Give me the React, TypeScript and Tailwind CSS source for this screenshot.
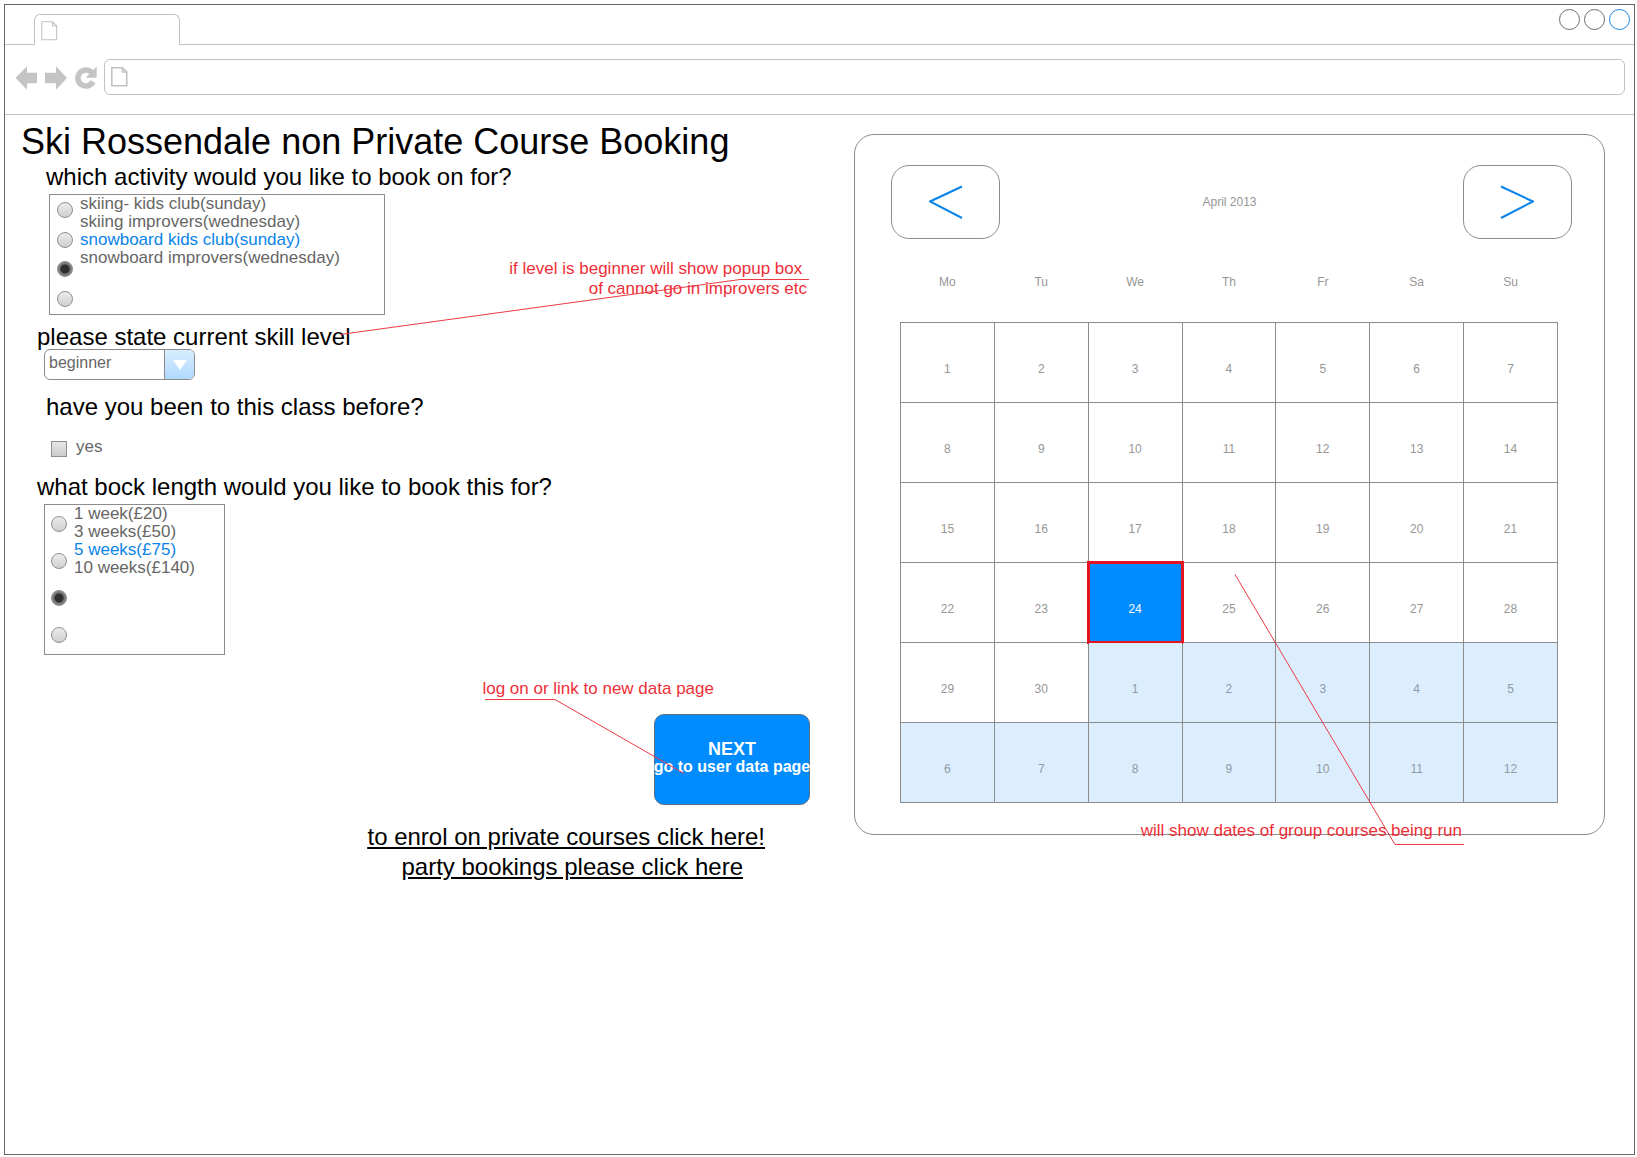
import { useState } from "react";

function PageIcon({ bold }: { bold?: boolean }) {
  return (
    <svg
      aria-hidden="true"
      className="block shrink-0"
      width="17"
      height="20"
      viewBox="0 0 17 20"
      fill="none"
      stroke="#c2c2c2"
      strokeWidth={bold ? 1.6 : 1.1}
    >
      <path d="M0.800 0.800H11.500L15.700 5V18.700H0.800Z" />
      <path d="M11.500 0.800V5H15.700" />
    </svg>
  );
}

function WindowBar() {
  return (
    <div className="flex h-10">
      <div className="w-[29px] shrink-0 border-b border-[#c2c2c2]" />
      <div className="mt-[9px] w-[146px] shrink-0 rounded-t-md border border-b-0 border-[#c2c2c2] pt-1.5 pl-1.5">
        <PageIcon />
      </div>
      <div className="flex flex-1 justify-end gap-1 border-b border-[#c2c2c2] pt-1 pr-1">
        <button aria-label="Minimize" className="size-[21px] rounded-full border border-[#6b6b6b]" />
        <button aria-label="Maximize" className="size-[21px] rounded-full border border-[#6b6b6b]" />
        <button aria-label="Close" className="size-[21px] rounded-full border border-[#1a84e0]" />
      </div>
    </div>
  );
}

function AddressBar() {
  return (
    <div className="flex items-start border-b border-[#c2c2c2] pt-3.5 pr-[9px] pb-[19px] pl-2.5">
      <div className="flex h-9 shrink-0 items-center gap-2 pt-0.5">
        <button aria-label="Back">
          <svg width="22" height="24" viewBox="0 0 22 24" fill="#c4c4c4" className="block">
            <path d="M0.500 12L12 0.300V6.700H22V17.300H12V23.700Z" />
          </svg>
        </button>
        <button aria-label="Forward">
          <svg width="22" height="24" viewBox="0 0 22 24" fill="#c4c4c4" className="block">
            <path d="M22 12L11 0.300V6.700H0V17.300H11V23.700Z" />
          </svg>
        </button>
        <button aria-label="Reload">
          <svg width="22" height="24" viewBox="0 0 22 24" className="block">
            <path
              d="M18 15.600A8 8 0 1 1 17 6.800"
              fill="none"
              stroke="#c4c4c4"
              strokeWidth="5.600"
            />
            <path d="M21.700 0.400V11.800H10.800Z" fill="#c4c4c4" />
          </svg>
        </button>
      </div>
      <label className="ml-[7px] flex h-9 flex-1 items-center gap-2 rounded-md border border-[#c2c2c2] pl-1.5">
        <PageIcon bold />
        <input aria-label="Address" className="min-w-0 flex-1 text-base outline-none" />
      </label>
    </div>
  );
}

type RadioBoxProps = {
  name: string;
  options: string[];
  initial: number;
  size: string;
};

function RadioBox({ name, options, initial, size }: RadioBoxProps) {
  const [selected, setSelected] = useState(initial);
  return (
    <div role="radiogroup" aria-label={name} className={`flex border border-[#8c8c8c] ${size}`}>
      <div className="flex flex-col justify-around">
        {options.map((option, i) => (
          <input
            key={option}
            type="radio"
            id={`${name}-${i}`}
            name={name}
            checked={selected === i}
            onChange={() => setSelected(i)}
            className="block size-4 appearance-none rounded-full border border-[#8f8f8f] bg-linear-to-b from-[#ececec] to-[#cfcfcf] checked:border-[#8a8a8a] checked:bg-[radial-gradient(circle,#2e2e2e_0_4px,#6e6e6e_5px,#9a9a9a_8px)]"
          />
        ))}
      </div>
      <div className="flex flex-col">
        {options.map((option, i) => (
          <label
            key={option}
            htmlFor={`${name}-${i}`}
            className={`text-[17px] leading-[18px] ${selected === i ? "text-[#0a84e8]" : "text-[#666666]"}`}
          >
            {option}
          </label>
        ))}
      </div>
    </div>
  );
}

function BookingForm() {
  return (
    <form className="flex min-w-0 flex-col pt-1.5" onSubmit={(e) => e.preventDefault()}>
      <h1 className="pl-4 text-[36px] leading-[42px]">Ski Rossendale non Private Course Booking</h1>

      <h2 className="pt-0.5 pl-[41px] text-2xl leading-6">
        which activity would you like to book on for?
      </h2>
      <div className="flex items-start justify-between pt-[5px] pr-[47px] pl-11">
        <RadioBox
          name="activity"
          options={[
            "skiing- kids club(sunday)",
            "skiing improvers(wednesday)",
            "snowboard kids club(sunday)",
            "snowboard improvers(wednesday)",
          ]}
          initial={2}
          size="h-[121px] w-[336px] gap-[7px] pl-[7px]"
        />
        <p className="pt-[65px] text-right text-[17px] leading-5 text-[#ee2f38]">
          if level is beginner will show popup box&nbsp;
          <br />
          of cannot go in improvers etc
        </p>
      </div>

      <label htmlFor="skill" className="pt-2.5 pl-8 text-2xl leading-6">
        please state current skill level
      </label>
      <div className="relative ml-[39px] h-[31px] w-[151px] overflow-hidden rounded-md border border-[#8c8c8c]">
        <select
          id="skill"
          defaultValue="beginner"
          className="block h-full w-full appearance-none pb-1 pl-1 text-base leading-5 text-[#666666]"
        >
          <option>beginner</option>
          <option>intermediate</option>
          <option>advanced</option>
        </select>
        <span className="pointer-events-none absolute inset-y-0 right-0 flex w-[30px] items-center justify-center border-l border-[#8c8c8c] bg-linear-to-b from-[#d9edff] to-[#afd9ff]">
          <svg width="14" height="10" viewBox="0 0 14 10" fill="#ffffff" aria-hidden="true">
            <path d="M0 0H14L7 10Z" />
          </svg>
        </span>
      </div>

      <h2 className="pt-[15px] pl-[41px] text-2xl leading-6">have you been to this class before?</h2>
      <div className="flex items-center gap-[9px] pt-[18px] pb-[18px] pl-[46px]">
        <input
          type="checkbox"
          id="returning"
          className="mt-1 size-4 appearance-none border border-[#8f8f8f] bg-linear-to-b from-[#e6e6e6] to-[#cccccc] checked:from-[#8a8a8a] checked:to-[#5a5a5a]"
        />
        <label htmlFor="returning" className="text-[17px] leading-5 text-[#666666]">
          yes
        </label>
      </div>

      <h2 className="pl-8 text-2xl leading-6">what bock length would you like to book this for?</h2>
      <div className="pt-[5px] pl-[39px]">
        <RadioBox
          name="length"
          options={["1 week(£20)", "3 weeks(£50)", "5 weeks(£75)", "10 weeks(£140)"]}
          initial={2}
          size="h-[151px] w-[181px] gap-[7px] pl-1.5"
        />
      </div>

      <div className="flex flex-col items-end pt-6 pr-11">
        <p className="pr-24 text-[17px] leading-5 text-[#ee2f38]">log on or link to new data page</p>
        <button
          type="submit"
          className="mt-[15px] flex h-[91px] w-[156px] flex-col items-center justify-center rounded-[10px] border border-[#5f6f80] bg-[#008cff] pb-[3px] font-bold whitespace-nowrap text-white"
        >
          <span className="text-lg leading-[18px]">NEXT</span>
          <span className="text-base leading-[18px]">go to user data page</span>
        </button>
      </div>

      <nav className="flex flex-col items-end pt-[17px] pr-[89px] text-2xl leading-[30px] underline">
        <a href="#private">to enrol on private courses click here!</a>
        <a href="#party" className="mr-[22px]">
          party bookings please click here
        </a>
      </nav>
    </form>
  );
}

const WEEKDAYS = ["Mo", "Tu", "We", "Th", "Fr", "Sa", "Su"];
const WEEKS = Array.from({ length: 6 }, (_, w) =>
  Array.from({ length: 7 }, (_, d) => {
    const n = w * 7 + d + 1;
    return n > 30 ? { day: n - 30, next: true } : { day: n, next: false };
  }),
);

function dayClass(day: number, next: boolean) {
  if (next) return "bg-[#dcedfd] text-[#8f9ba6]";
  if (day === 24) return "bg-[#008cff] text-white outline-3 -outline-offset-1 outline-[#e3141f]";
  return "text-[#969696]";
}

function Calendar() {
  return (
    <section
      aria-label="Calendar"
      className="relative mt-[19px] flex flex-col self-start rounded-[20px] border border-[#8c8c8c] pt-[30px] pb-[31px] text-xs"
    >
      <div className="flex items-center justify-between pr-8 pl-9 text-[#969696]">
        <button
          aria-label="Previous month"
          className="flex h-[74px] w-[109px] items-center justify-center rounded-[18px] border border-[#8c8c8c]"
        >
          <svg width="34" height="34" viewBox="0 0 34 34" fill="none" stroke="#0a84e8" strokeWidth="2">
            <path d="M33 1.500L1 16.500L33 33" />
          </svg>
        </button>
        <span className="pr-1">April 2013</span>
        <button
          aria-label="Next month"
          className="flex h-[74px] w-[109px] items-center justify-center rounded-[18px] border border-[#8c8c8c]"
        >
          <svg width="34" height="34" viewBox="0 0 34 34" fill="none" stroke="#0a84e8" strokeWidth="2">
            <path d="M1 1.500L33 16.500L1 33" />
          </svg>
        </button>
      </div>
      <div className="pt-[3px] pr-[46px] pl-[45px]">
        <table className="w-full table-fixed border-collapse">
          <thead>
            <tr>
              {WEEKDAYS.map((d) => (
                <th key={d} scope="col" className="h-20 p-0 text-center font-normal text-[#969696]">
                  {d}
                </th>
              ))}
            </tr>
          </thead>
          <tbody>
            {WEEKS.map((week, w) => (
              <tr key={w}>
                {week.map(({ day, next }) => (
                  <td key={day} className="h-20 border border-[#8c8c8c] p-0">
                    <button
                      className={`relative block h-[79px] w-full pt-3.5 ${dayClass(day, next)}`}
                    >
                      {day}
                    </button>
                  </td>
                ))}
              </tr>
            ))}
          </tbody>
        </table>
      </div>
      <p className="absolute right-[142px] -bottom-[7px] text-[17px] leading-5 text-[#ee2f38]">
        will show dates of group courses being run
      </p>
    </section>
  );
}

/* Leader lines that tie each red note to the control it describes. */
function NoteLines() {
  return (
    <svg
      aria-hidden="true"
      className="pointer-events-none absolute inset-x-0 top-0 h-[740px] w-full"
      viewBox="0 0 1629 740"
      preserveAspectRatio="none"
      fill="none"
      stroke="#ee3a44"
      strokeWidth="1"
    >
      <path d="M335 219.500L735 164.500H804" vectorEffect="non-scaling-stroke" />
      <path d="M480 584.500H550L679 658.500" vectorEffect="non-scaling-stroke" />
      <path d="M1230 459.500L1390 729.500H1459" vectorEffect="non-scaling-stroke" />
    </svg>
  );
}

export default function App() {
  return (
    <div className="flex min-h-screen bg-white pt-1 pr-0.5 pb-0.5 pl-1 font-['Liberation_Sans',Arial,sans-serif] text-black">
      <div className="flex min-w-0 flex-1 flex-col border border-[#666666]">
        <header>
          <WindowBar />
          <AddressBar />
        </header>
        <main className="relative grid grid-cols-[849fr_751fr] pr-[29px]">
          <BookingForm />
          <Calendar />
          <NoteLines />
        </main>
      </div>
    </div>
  );
}
